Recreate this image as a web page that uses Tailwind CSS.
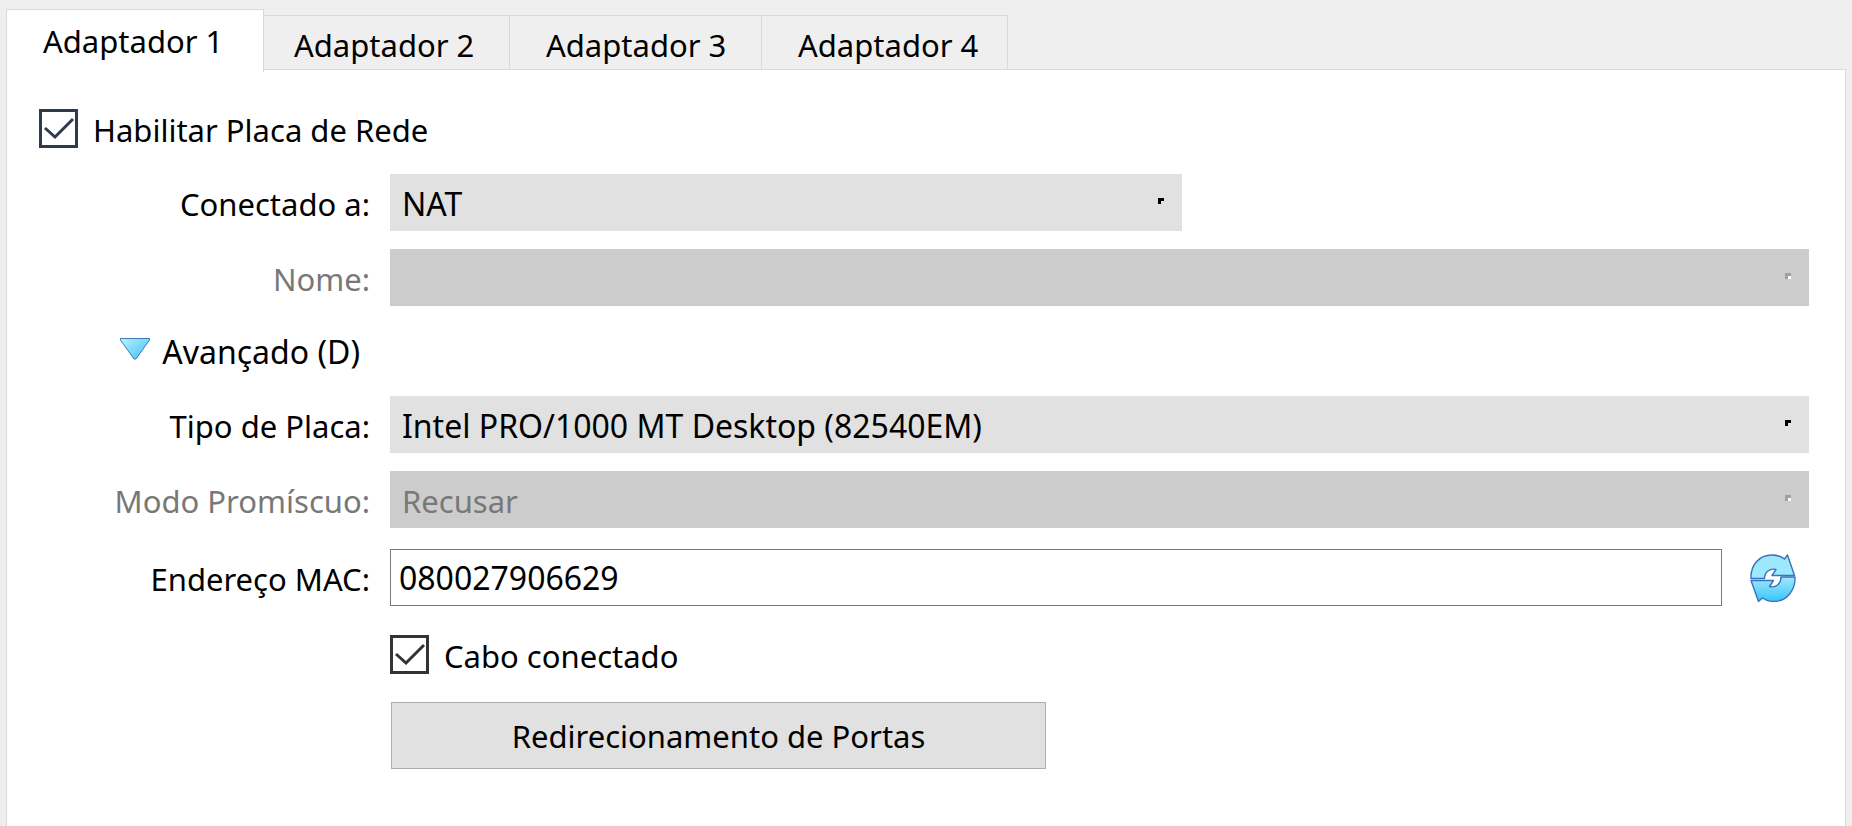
<!DOCTYPE html>
<html lang="pt-BR">
<head>
  <meta charset="UTF-8" />
  <meta name="viewport" content="width=device-width, initial-scale=1.0" />
  <title>Rede - Configurações</title>
  <script src="https://cdn.jsdelivr.net/npm/@tailwindcss/browser@4"></script>
</head>
<body class="bg-[#efefef] font-['Noto_Sans',sans-serif] text-[31px] leading-10 text-black min-h-screen flex flex-col pt-[9px] px-1.5 overflow-x-hidden">

  <!-- Tabs -->
  <nav class="flex items-end" role="tablist">
    <button role="tab" aria-selected="true" class="relative z-10 -mb-[3px] h-[63px] w-[258px] pl-9 text-left bg-white border border-b-0 border-[#d9d9d9]">Adaptador 1</button>
    <button role="tab" class="h-[54px] w-[246px] pl-[30px] pt-1 text-left border-t border-r border-[#d9d9d9]">Adaptador 2</button>
    <button role="tab" class="h-[54px] w-[252px] pl-9 pt-1 text-left border-t border-r border-[#d9d9d9]">Adaptador 3</button>
    <button role="tab" class="h-[54px] w-[246px] pl-9 pt-1 text-left border-t border-r border-[#d9d9d9]">Adaptador 4</button>
  </nav>

  <!-- Panel -->
  <main class="grow bg-white border border-b-0 border-[#d9d9d9] pl-8 pr-9 pt-9">
    <label class="flex w-fit items-center gap-[15px]">
      <span class="grid">
        <input type="checkbox" checked class="peer col-start-1 row-start-1 appearance-none size-[39px] border-3 border-[#2f3b4b] bg-white" />
        <svg class="col-start-1 row-start-1 size-[39px] pointer-events-none invisible peer-checked:visible" viewBox="0 0 39 39" fill="none" stroke="#2f3b4b" stroke-width="3"><path d="M6 19L16 28L34 10" /></svg>
      </span>
      <span class="pt-1">Habilitar Placa de Rede</span>
    </label>

    <form class="mt-6 grid grid-cols-[331px_1fr] gap-x-5 gap-y-[18px] items-center">
      <label for="attached" class="text-right pt-0.5">Conectado a:</label>
      <div class="grid items-center w-[792px] max-w-full">
        <select id="attached" class="col-start-1 row-start-1 appearance-none h-[57px] w-full pl-3 pt-0.5 bg-[#e1e1e1] text-[32px]">
          <option>NAT</option>
        </select>
        <svg class="col-start-1 row-start-1 justify-self-end mr-[18px] mb-1 size-1.5 pointer-events-none" viewBox="0 0 6 6"><path d="M0 0H6V3H3V6H0Z" fill="#000" /></svg>
      </div>

      <label for="name" class="text-right pt-0.5 text-[#787878]">Nome:</label>
      <div class="grid items-center">
        <select id="name" disabled class="col-start-1 row-start-1 appearance-none h-[57px] w-full pl-3 pt-0.5 bg-[#cccccc] text-[#787878] opacity-100"></select>
        <svg class="col-start-1 row-start-1 justify-self-end mr-[18px] mb-1 size-1.5 pointer-events-none" viewBox="0 0 6 6"><path d="M0 0H6V3H3V6H0Z" fill="#a0a0a0" /><path d="M3 3H6V6H3Z" fill="#fff" /></svg>
      </div>

      <button type="button" class="flex items-center gap-3 h-[54px] justify-self-end mr-2.5 text-[32px]" aria-expanded="true">
        <svg class="w-[30px] h-[22px] mb-1" viewBox="0 0 30 22">
          <defs><linearGradient id="tri" x1="0" y1="0" x2="1" y2="1"><stop offset="0" stop-color="#b9f2ff" /><stop offset="1" stop-color="#3fc0f5" /></linearGradient></defs>
          <path d="M.5.5H29.5V2L16 21H14L.5 2Z" fill="url(#tri)" stroke="#3f78b5" />
        </svg>
        <span class="pt-0.5">Avançado (D)</span>
      </button>
      <span></span>

      <label for="type" class="text-right pt-0.5">Tipo de Placa:</label>
      <div class="grid items-center">
        <select id="type" class="col-start-1 row-start-1 appearance-none h-[57px] w-full pl-3 pt-0.5 bg-[#e1e1e1] text-[32px]">
          <option>Intel PRO/1000 MT Desktop (82540EM)</option>
        </select>
        <svg class="col-start-1 row-start-1 justify-self-end mr-[18px] mb-1 size-1.5 pointer-events-none" viewBox="0 0 6 6"><path d="M0 0H6V3H3V6H0Z" fill="#000" /></svg>
      </div>

      <label for="promisc" class="text-right pt-0.5 text-[#787878]">Modo Promíscuo:</label>
      <div class="grid items-center">
        <select id="promisc" disabled class="col-start-1 row-start-1 appearance-none h-[57px] w-full pl-3 pt-0.5 bg-[#cccccc] text-[#787878] opacity-100">
          <option>Recusar</option>
        </select>
        <svg class="col-start-1 row-start-1 justify-self-end mr-[18px] mb-1 size-1.5 pointer-events-none" viewBox="0 0 6 6"><path d="M0 0H6V3H3V6H0Z" fill="#a0a0a0" /><path d="M3 3H6V6H3Z" fill="#fff" /></svg>
      </div>

      <label for="mac" class="text-right pt-1.5">Endereço MAC:</label>
      <div class="flex items-center pt-[3px]">
        <input id="mac" type="text" value="080027906629" class="grow min-w-0 h-[57px] pl-2 bg-white border border-[#7a7a7a] text-[32px]" />
        <button type="button" aria-label="Gerar novo endereço MAC" class="ml-7 mr-[13px]">
          <svg class="w-[46px] h-12" viewBox="0 0 46 48">
            <defs><linearGradient id="ref" x1="0" y1="0" x2="0" y2="48" gradientUnits="userSpaceOnUse"><stop offset="0" stop-color="#9fe6fb" /><stop offset=".5" stop-color="#9beafd" /><stop offset="1" stop-color="#38c2fa" /></linearGradient></defs>
            <g fill="url(#ref)" stroke="#3a70bd" stroke-width="1.4" stroke-linejoin="round">
              <path d="M1 24.500C.5 11 9 1 22 1C27 1 31 2.500 34.500 5L37.500 1L44.500 21.500H22L26 15.500C20 14 14.500 18 14.500 24.500Z" />
              <path d="M45 23C45.500 37 36 47.500 24 47.500C19 47.500 16 46.500 12.500 44L8.500 47.500L1 26.500H23.500L19.500 32.500C26 34 31 30 31 23Z" />
            </g>
          </svg>
        </button>
      </div>

      <label class="col-start-2 flex w-fit h-[60px] items-center gap-[15px]">
        <span class="grid">
          <input type="checkbox" checked class="peer col-start-1 row-start-1 appearance-none size-[39px] border-3 border-[#333333] bg-white" />
          <svg class="col-start-1 row-start-1 size-[39px] pointer-events-none invisible peer-checked:visible" viewBox="0 0 39 39" fill="none" stroke="#333" stroke-width="3"><path d="M6 19L16 28L34 10" /></svg>
        </span>
        <span class="pt-1">Cabo conectado</span>
      </label>

      <button type="button" class="col-start-2 ml-px h-[67px] w-[655px] max-w-full bg-[#e1e1e1] border border-[#adadad]">Redirecionamento de Portas</button>
    </form>
  </main>

</body>
</html>
